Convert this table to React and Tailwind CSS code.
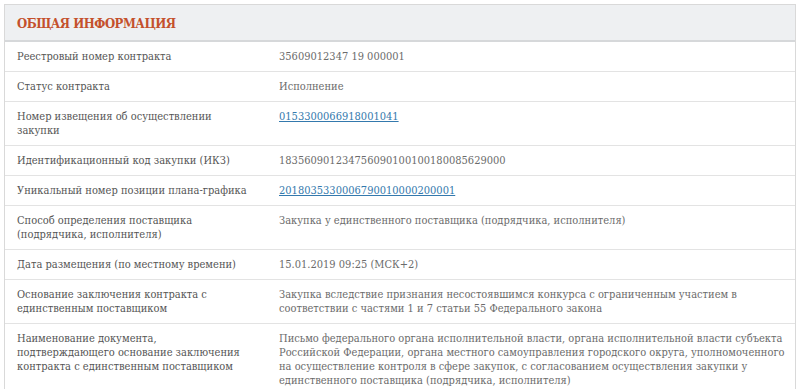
import React from "react";

const rows = [
  { label: ["Реестровый номер контракта"], value: ["35609012347 19 000001"] },
  { label: ["Статус контракта"], value: ["Исполнение"] },
  {
    label: ["Номер извещения об осуществлении", "закупки"],
    value: ["0153300066918001041"],
    link: true,
  },
  { label: ["Идентификационный код закупки (ИКЗ)"], value: ["183560901234756090100100180085629000"] },
  {
    label: ["Уникальный номер позиции плана-графика"],
    value: ["2018035330006790010000200001"],
    link: true,
  },
  {
    label: ["Способ определения поставщика", "(подрядчика, исполнителя)"],
    value: ["Закупка у единственного поставщика (подрядчика, исполнителя)"],
  },
  { label: ["Дата размещения (по местному времени)"], value: ["15.01.2019 09:25 (МСК+2)"] },
  {
    label: ["Основание заключения контракта с", "единственным поставщиком"],
    value: [
      "Закупка вследствие признания несостоявшимся конкурса с ограниченным участием в",
      "соответствии с частями 1 и 7 статьи 55 Федерального закона",
    ],
  },
  {
    label: [
      "Наименование документа,",
      "подтверждающего основание заключения",
      "контракта с единственным поставщиком",
    ],
    value: [
      "Письмо федерального органа исполнительной власти, органа исполнительной власти субъекта",
      "Российской Федерации, органа местного самоуправления городского округа, уполномоченного",
      "на осуществление контроля в сфере закупок, с согласованием осуществления закупки у",
      "единственного поставщика (подрядчика, исполнителя)",
    ],
  },
];

// one block per visual line, so wrapping follows the original
const Lines = ({ lines }) =>
  lines.map((l, i) => (
    <span key={i} className="block whitespace-nowrap">
      {l}
    </span>
  ));

export default function App() {
  return (
    <div className="w-[800px] h-[389px] bg-white overflow-hidden pt-1 px-1 font-['DejaVu_Serif',serif] [font-stretch:condensed]">
      <div className="border border-[#d9d9d9] border-b-0 bg-white">
        <div className="h-[37px] flex items-center px-3 pt-[3px] bg-[#eef0f2] border-b-2 border-[#d6d8da]">
          <h2 className="text-[13px] font-bold text-[#c4502c] uppercase tracking-[-0.5px]">
            Общая информация
          </h2>
        </div>
        {rows.map((r, i) => (
          <div
            key={i}
            className="flex text-[11px] leading-[14px] border-b border-[#e3e3e3] pt-[8px] pb-[7px]"
          >
            <div className="w-[274px] shrink-0 pl-3 text-[#555]">
              <Lines lines={r.label} />
            </div>
            <div className="flex-1 pr-3 text-[#6b6b6b]">
              {r.link ? (
                <a href="#" className="text-[#3479ad] underline">
                  {r.value[0]}
                </a>
              ) : (
                <Lines lines={r.value} />
              )}
            </div>
          </div>
        ))}
      </div>
    </div>
  );
}
